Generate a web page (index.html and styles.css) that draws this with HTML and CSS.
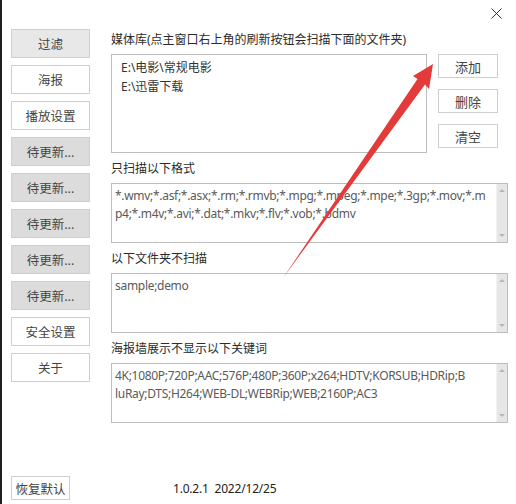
FILE: index.html
```html
<!DOCTYPE html>
<html lang="zh-CN">
<head>
	<meta charset="UTF-8">
	<meta name="viewport" content="width=device-width, initial-scale=1.0">
	<title>设置</title>
	<link rel="stylesheet" href="styles.css">
</head>
<body>

	<div class="ventana">
		<button class="cerrar" type="button" aria-label="关闭">
			<svg width="11" height="11" viewBox="0 0 11 11"><path d="M0.5 0.5 L10.5 10.5 M10.5 0.5 L0.5 10.5" stroke="#333" stroke-width="1" fill="none"/></svg>
		</button>

		<div class="cuerpo">
			<nav class="lateral">
				<button class="boton gris1">过滤</button>
				<button class="boton">海报</button>
				<button class="boton">播放设置</button>
				<button class="boton gris2">待更新...</button>
				<button class="boton gris2">待更新...</button>
				<button class="boton gris2">待更新...</button>
				<button class="boton gris2">待更新...</button>
				<button class="boton gris2">待更新...</button>
				<button class="boton">安全设置</button>
				<button class="boton">关于</button>
			</nav>

			<main class="principal">
				<section class="seccion">
					<p class="titulo">媒体库(点主窗口右上角的刷新按钮会扫描下面的文件夹)</p>
					<div class="fila">
						<div class="lista">
							<div>E:\电影\常规电影</div>
							<div>E:\迅雷下载</div>
						</div>
						<div class="acciones">
							<button class="chico">添加</button>
							<button class="chico">删除</button>
							<button class="chico">清空</button>
						</div>
					</div>
				</section>

				<section class="seccion">
					<p class="titulo">只扫描以下格式</p>
					<div class="caja">
						<div class="texto">*.wmv;*.asf;*.asx;*.rm;*.rmvb;*.mpg;*.mpeg;*.mpe;*.3gp;*.mov;*.m<br>p4;*.m4v;*.avi;*.dat;*.mkv;*.flv;*.vob;*.bdmv</div>
						<div class="barra"><span class="arriba"></span><span class="abajo"></span></div>
					</div>
				</section>

				<section class="seccion">
					<p class="titulo">以下文件夹不扫描</p>
					<div class="caja">
						<div class="texto">sample;demo</div>
						<div class="barra"><span class="arriba"></span><span class="abajo"></span></div>
					</div>
				</section>

				<section class="seccion">
					<p class="titulo">海报墙展示不显示以下关键词</p>
					<div class="caja">
						<div class="texto">4K;1080P;720P;AAC;576P;480P;360P;x264;HDTV;KORSUB;HDRip;B<br>luRay;DTS;H264;WEB-DL;WEBRip;WEB;2160P;AC3</div>
						<div class="barra"><span class="arriba"></span><span class="abajo"></span></div>
					</div>
				</section>
			</main>
		</div>

		<footer class="pie">
			<button class="restaurar">恢复默认</button>
			<span class="version">1.0.2.1&nbsp; 2022/12/25</span>
		</footer>

		<svg class="flecha" width="516" height="504" viewBox="0 0 516 504">
			<polygon points="433,64 429,89 425,84.5 283,278 417.5,79 413,76" fill="#e43a3a"/>
		</svg>
	</div>

</body>
</html>
```

FILE: styles.css
```css
*{
	box-sizing: border-box;
}

body{
	margin: 0;
	padding: 0;
	background: #fff;
	font-family: "Noto Sans", "Noto Sans CJK SC", sans-serif;
	font-size: 12px;
	color: #333;
}

.ventana{
	position: relative;
	width: 516px;
	height: 504px;
	background: #fff;
	border-left: 2px solid #1f1f1f;
	display: flex;
	flex-direction: column;
	overflow: hidden;
}

.cerrar{
	position: absolute;
	top: 8px;
	right: 14px;
	width: 11px;
	height: 11px;
	padding: 0;
	border: 0;
	background: none;
	display: flex;
}

.cuerpo{
	display: flex;
	gap: 21px;
	padding-left: 9px;
}

.lateral{
	width: 79px;
	padding-top: 29px;
	display: flex;
	flex-direction: column;
	gap: 7px;
}

.boton{
	height: 29px;
	border: 1px solid #cfcfcf;
	background: #fff;
	font-family: inherit;
	font-size: 12.5px;
	color: #444;
	padding: 0;
}

.gris1{
	background: #e8e8e8;
}

.gris2{
	background: #dcdcdc;
}

.principal{
	width: 397px;
	padding-top: 32px;
	display: flex;
	flex-direction: column;
	gap: 8px;
}

.seccion{
	display: flex;
	flex-direction: column;
	gap: 6px;
}

.titulo{
	margin: 0;
	line-height: 16px;
	color: #2b2b2b;
}

.fila{
	display: flex;
	gap: 11px;
}

.lista{
	width: 316px;
	height: 99px;
	border: 1px solid #bdbdbd;
	padding: 3px 9px;
	line-height: 19px;
	color: #333;
}

.acciones{
	display: flex;
	flex-direction: column;
	gap: 11px;
}

.chico{
	width: 60px;
	height: 24px;
	border: 1px solid #cfcfcf;
	background: #fff;
	font-family: inherit;
	font-size: 13px;
	color: #444;
	padding: 0;
}

.caja{
	height: 60px;
	border: 1px solid #bdbdbd;
	display: flex;
}

.texto{
	flex: 1;
	padding: 3px 3px;
	line-height: 18px;
	color: #5a5a5a;
	letter-spacing: -0.3px;
	white-space: nowrap;
	overflow: hidden;
}

.barra{
	width: 11px;
	background: #e6e6e6;
	border-left: 1px solid #f2f2f2;
	display: flex;
	flex-direction: column;
	justify-content: space-between;
	align-items: center;
	padding: 5px 0;
}

.arriba{
	width: 0;
	height: 0;
	border-left: 3px solid transparent;
	border-right: 3px solid transparent;
	border-bottom: 3px solid #b5b5b5;
}

.abajo{
	width: 0;
	height: 0;
	border-left: 3px solid transparent;
	border-right: 3px solid transparent;
	border-top: 3px solid #b5b5b5;
}

.pie{
	margin-top: auto;
	padding: 0 0 4px 9px;
	display: flex;
	align-items: center;
	gap: 103px;
}

.restaurar{
	width: 59px;
	height: 24px;
	border: 1px solid #cfcfcf;
	background: #fff;
	font-family: inherit;
	font-size: 12.5px;
	color: #444;
	padding: 0;
}

.version{
	font-size: 12px;
	letter-spacing: -0.2px;
	color: #222;
}

.flecha{
	position: absolute;
	top: 0;
	left: -2px;
	pointer-events: none;
}
```
